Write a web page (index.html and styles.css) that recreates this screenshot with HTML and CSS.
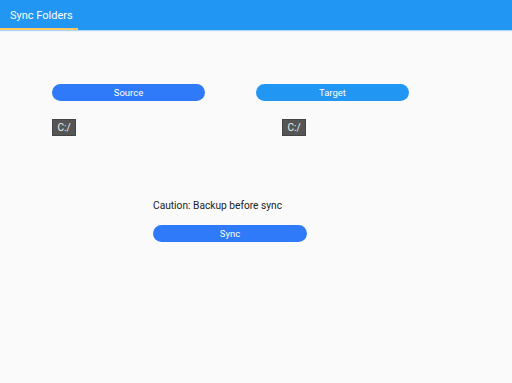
FILE: index.html
```html
<!DOCTYPE html>
<html>
<head>
<meta charset="utf-8">
<link rel="stylesheet" href="styles.css">
</head>
<body>
<header class="appbar">
  <div class="tab">Sync Folders</div>
</header>
<main class="content">
  <div class="columns">
    <div class="col">
      <button class="btn btn-primary">Source</button>
      <div class="path">C:/</div>
    </div>
    <div class="col col-right">
      <button class="btn btn-light">Target</button>
      <div class="path path-right">C:/</div>
    </div>
  </div>
  <div class="sync">
    <p class="caution">Caution: Backup before sync</p>
    <button class="btn btn-primary btn-sync">Sync</button>
  </div>
</main>
</body>
</html>
```
FILE: styles.css
```css
html, body {
  margin: 0;
  padding: 0;
  background: #fafafa;
  font-family: Roboto, "Liberation Sans", sans-serif;
}
.appbar {
  height: 30px;
  background: #2196f3;
  display: flex;
  box-shadow: 0 1px 1px rgba(33,150,243,0.35);
}
.tab {
  width: 78px;
  box-sizing: border-box;
  padding: 9px 0 0 10px;
  color: #fff;
  font-size: 11px;
  border-bottom: 2px solid #ffc862;
}
.content {
  padding: 54px 0 0 52px;
}
.columns {
  display: flex;
  gap: 51px;
}
.col {
  width: 153px;
  display: flex;
  flex-direction: column;
  align-items: flex-start;
}
.btn {
  width: 153px;
  height: 17px;
  border: none;
  border-radius: 9px;
  color: #fff;
  font-family: Roboto, "Liberation Sans", sans-serif;
  font-size: 9.5px;
  padding: 0;
  line-height: 17px;
}
.btn-primary { background: #2f7af8; }
.btn-light { background: #2196f3; }
.btn-sync { width: 154px; }
.path {
  margin-top: 18px;
  width: 24px;
  height: 17px;
  box-sizing: border-box;
  background: #555555;
  border: 1px solid #444;
  color: #f0f0f0;
  font-size: 10px;
  line-height: 15px;
  text-align: center;
}
.path-right { margin-left: 26px; }
.sync {
  margin: 63px 0 0 101px;
  display: flex;
  flex-direction: column;
  align-items: flex-start;
}
.caution {
  margin: 0;
  font-size: 10.2px;
  color: #222;
  line-height: 14px;
}
.sync .btn { margin-top: 12px; }
```
